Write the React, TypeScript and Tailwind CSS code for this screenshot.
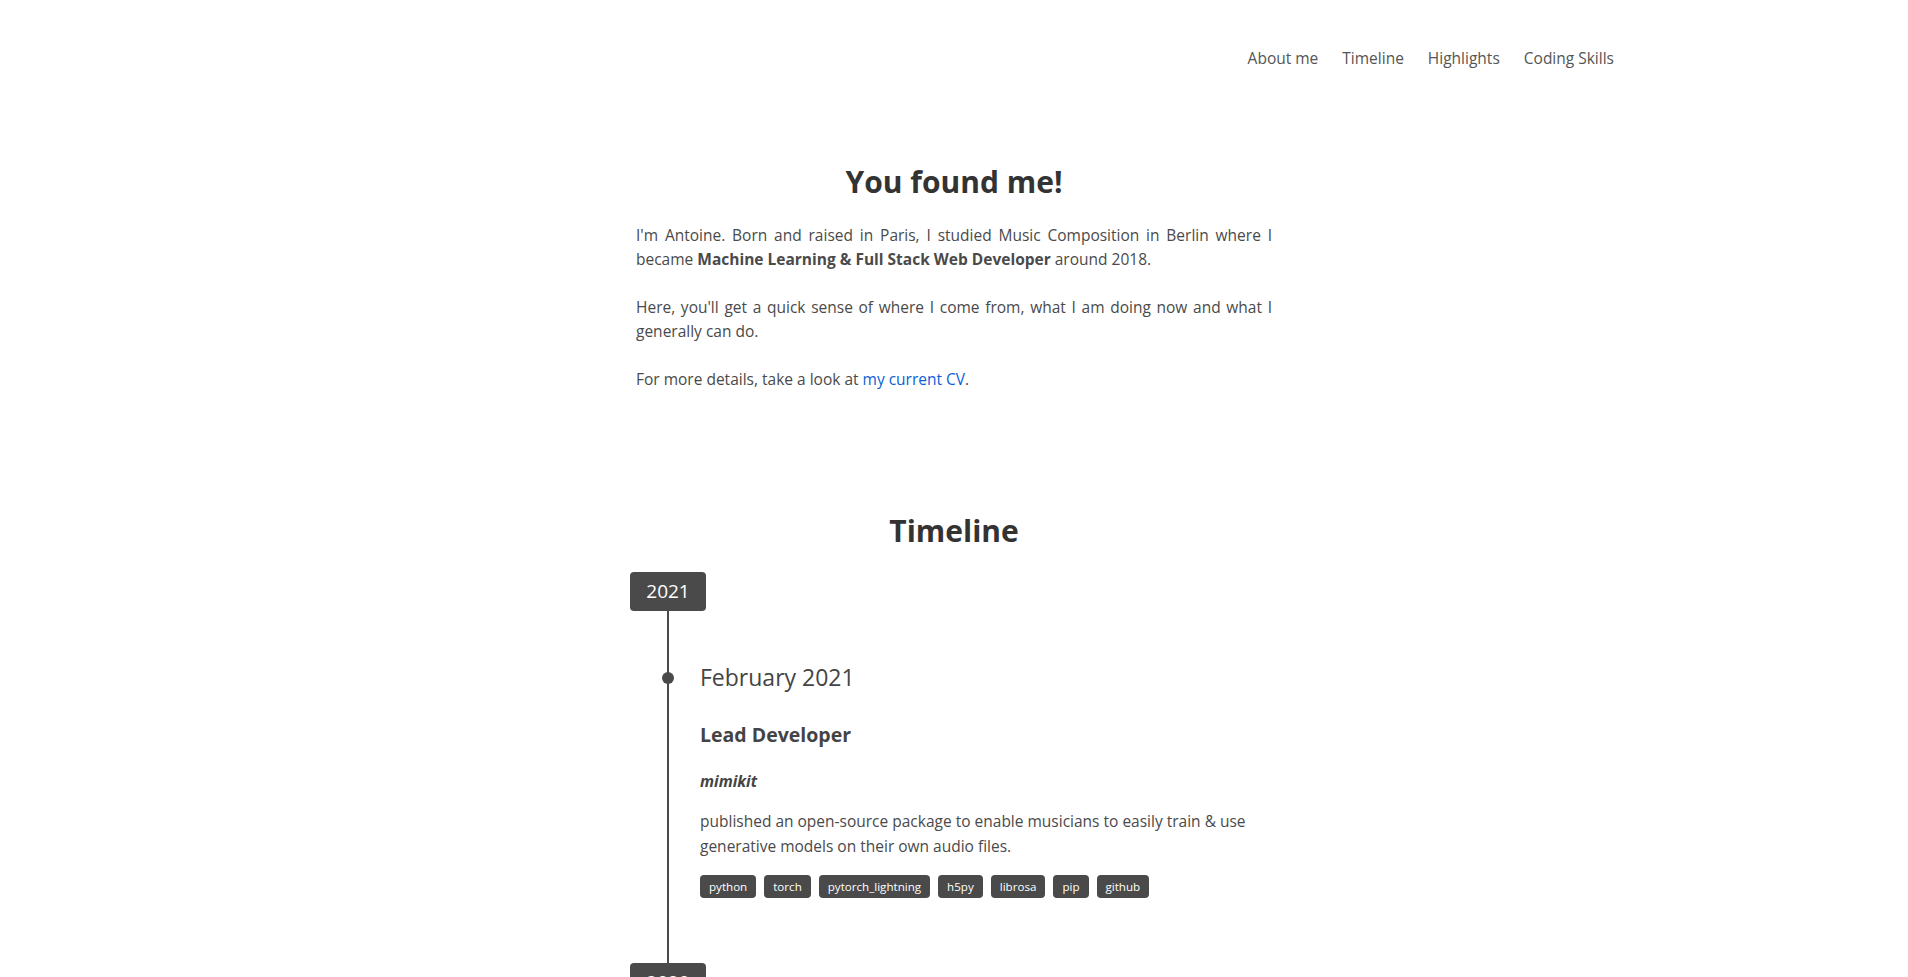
import React from 'react';

const font = { fontFamily: '"Open Sans", "Noto Sans", Arial, sans-serif' };

const navLinks = ['About me', 'Timeline', 'Highlights', 'Coding Skills'];

const tags = ['python', 'torch', 'pytorch_lightning', 'h5py', 'librosa', 'pip', 'github'];

function YearBadge({ year }: { year: string }) {
  return (
    <div className="w-[76px] h-[39px] flex items-center justify-center rounded-[4px] bg-[#4a4a4a] text-white text-[19px]">
      {year}
    </div>
  );
}

function TimelineEntry() {
  return (
    <div className="relative ml-[37px] border-l-[2px] border-[#4a4a4a] pl-[31px] pt-[52px] pb-[65px]">
      <span className="absolute left-[-7px] top-[61px] w-3 h-3 rounded-full bg-[#4a4a4a]" />
      <div className="text-[23px] leading-[29px] text-[#444]">February 2021</div>
      <h3 className="mt-[31px] text-[19.5px] leading-[24px] font-bold text-[#444]">Lead Developer</h3>
      <div className="mt-[22px] text-[15.5px] leading-[24px] font-bold italic text-[#444]">mimikit</div>
      <p className="mt-[16px] text-[15.5px] leading-[25px] text-[#4a4a4a]">
        published an open-source package to enable musicians to easily train &amp; use generative models on their own audio files.
      </p>
      <div className="mt-[16px] flex flex-wrap gap-2">
        {tags.map(t => (
          <span key={t} className="h-[23px] px-[9px] flex items-center rounded-[4px] bg-[#4a4a4a] text-white text-[11.6px]">
            {t}
          </span>
        ))}
      </div>
    </div>
  );
}

export default function App() {
  return (
    <div className="min-h-screen bg-white text-[#4a4a4a]" style={font}>
      <header className="max-w-[1320px] mx-auto pt-[46px]">
        <nav className="flex justify-end gap-6 text-[15.5px] leading-[24px] text-[#555]">
          {navLinks.map(l => (
            <a key={l} href="#" className="hover:text-black">{l}</a>
          ))}
        </nav>
      </header>

      <main className="w-[636px] mx-auto">
        <section>
          <h1 className="mt-[93px] text-center text-[30px] leading-[38px] font-bold text-[#333]">You found me!</h1>
          <div className="mt-[22px] text-[15.5px] leading-[24px] text-justify text-[#4a4a4a] flex flex-col gap-6">
            <p>
              I'm Antoine. Born and raised in Paris, I studied Music Composition in Berlin where I became{' '}
              <b className="font-bold">Machine Learning &amp; Full Stack Web Developer</b> around 2018.
            </p>
            <p>
              Here, you'll get a quick sense of where I come from, what I am doing now and what I generally can do.
            </p>
            <p className="text-left">
              For more details, take a look at <a href="#" className="text-[#0b5fd7]">my current CV</a>.
            </p>
          </div>
        </section>

        <section className="mt-[121px]">
          <h2 className="text-center text-[30px] leading-[38px] font-bold text-[#333]">Timeline</h2>
          <div className="mt-[22px] -ml-[6px]">
            <YearBadge year="2021" />
            <TimelineEntry />
            <YearBadge year="2020" />
          </div>
        </section>
      </main>
    </div>
  );
}
